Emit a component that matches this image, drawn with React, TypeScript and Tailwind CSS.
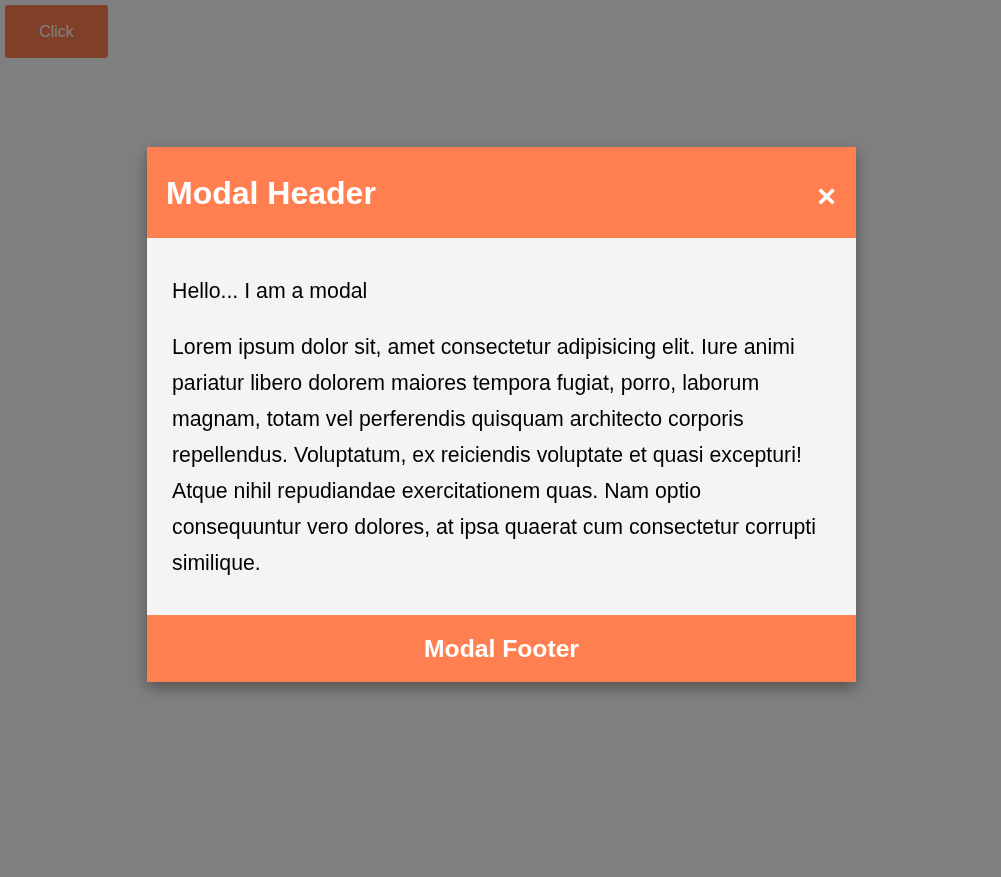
export default function App() {
	return (
		<div className="relative min-h-[877px] bg-white font-['Liberation_Sans',Arial,sans-serif]">
			<button
				type="button"
				className="m-[5px] h-[53px] w-[103px] rounded-[3px] bg-[#ff7f50] text-[16px] text-white"
			>
				Click
			</button>

			<div className="fixed inset-0 bg-black/50">
				<div className="ml-[147px] mt-[147px] w-[709px] bg-[#f4f4f4] shadow-[0_6px_14px_rgba(0,0,0,0.35)]">
					<div className="flex h-[91px] items-center justify-between bg-[#ff7f50] pl-[19px] pr-5 text-white">
						<h2 className="text-[32px] font-bold leading-none">Modal Header</h2>
						<span className="mt-[6px] text-[32px] font-bold leading-none">×</span>
					</div>

					<div className="px-[25px] pb-[34px] pt-[35px] text-[21.3px] leading-[36px] text-black">
						<p>Hello... I am a modal</p>
						<p className="mt-5">
							Lorem ipsum dolor sit, amet consectetur adipisicing elit. Iure animi pariatur libero dolorem
							maiores tempora fugiat, porro, laborum magnam, totam vel perferendis quisquam architecto
							corporis repellendus. Voluptatum, ex reiciendis voluptate et quasi excepturi! Atque nihil
							repudiandae exercitationem quas. Nam optio consequuntur vero dolores, at ipsa quaerat cum
							consectetur corrupti similique.
						</p>
					</div>

					<div className="flex h-[67px] items-center justify-center bg-[#ff7f50] text-white">
						<h3 className="mt-[2px] text-[24.7px] font-bold leading-none">Modal Footer</h3>
					</div>
				</div>
			</div>
		</div>
	);
}
